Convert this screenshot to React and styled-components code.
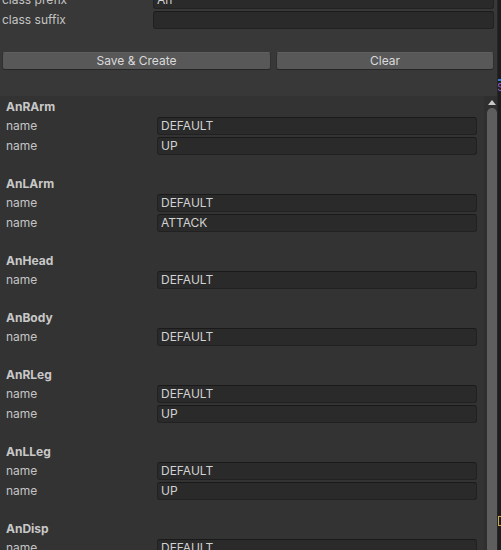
import styled, { createGlobalStyle } from "styled-components";

const GlobalStyle = createGlobalStyle`
    html, body {
        margin: 0;
        padding: 0;
        background: #383838;
        overflow: hidden;
    }
    * {
        box-sizing: border-box;
    }
`;

const Frame = styled.div`
    display: flex;
    width: 501px;
    height: 550px;
    overflow: hidden;
    font-family: Inter, "Noto Sans", sans-serif;
    font-size: 12px;
    color: #c4c4c4;
`;

const Window = styled.div`
    flex: 1;
    display: flex;
    flex-direction: column;
    min-width: 0;
    background: #383838;
`;

const SideStrip = styled.div`
    width: 4px;
    background: #1d1d1d;
    display: flex;
    flex-direction: column;
    overflow: hidden;
    border-left: 1px solid #262626;
`;

const StripSpacer = styled.div`
    height: ${({ $h }) => $h}px;
    flex-shrink: 0;
`;

const StripAccent = styled.div`
    height: 2px;
    background: #2c7fd6;
    flex-shrink: 0;
`;

const StripGlyph = styled.div`
    color: #8a5fc8;
    font-size: 11px;
    line-height: 12px;
    margin-left: -1px;
    flex-shrink: 0;
`;

const StripMark = styled.div`
    width: 3px;
    height: 10px;
    border: 1px solid #c9a94a;
    border-right: none;
    flex-shrink: 0;
`;

const TopPanel = styled.div`
    margin-top: -10px;
    padding: 0 3px 0 2px;
    display: flex;
    flex-direction: column;
`;

const FieldRow = styled.div`
    display: grid;
    grid-template-columns: 151px 1fr;
    align-items: center;
    height: 20px;
`;

const Label = styled.span`
    color: #c4c4c4;
    white-space: nowrap;
    line-height: 18px;
`;

const Field = styled.div`
    height: 18px;
    background: #2a2a2a;
    border: 1px solid #212121;
    border-top-color: #1a1a1a;
    border-radius: 3px;
    padding: 0 3px;
    color: #d2d2d2;
    line-height: 16px;
    white-space: nowrap;
    overflow: hidden;
`;

const ButtonBar = styled.div`
    display: grid;
    grid-template-columns: 269px 1fr;
    gap: 5px;
    margin-top: 22px;
`;

const Button = styled.button`
    height: 18px;
    background: #585858;
    border: 1px solid #303030;
    border-top-color: #5f5f5f;
    border-bottom-color: #252525;
    border-radius: 3px;
    color: #dadada;
    font-family: inherit;
    font-size: 12px;
    line-height: 16px;
    padding: 0;
`;

const ScrollView = styled.div`
    margin-top: 26px;
    flex: 1;
    display: flex;
    min-height: 0;
    background: #333333;
    overflow: hidden;
`;

const ListContent = styled.div`
    flex: 1;
    padding: 1px 7px 0 6px;
    display: flex;
    flex-direction: column;
    min-width: 0;
`;

const Section = styled.div`
    display: flex;
    flex-direction: column;
    padding-bottom: 18px;
    flex-shrink: 0;
`;

const SectionTitle = styled.div`
    height: 19px;
    line-height: 19px;
    font-weight: 700;
    color: #c8c8c8;
`;

const ListRow = styled(FieldRow)`
    grid-template-columns: 151px 1fr;
`;

const ScrollBar = styled.div`
    width: 13px;
    flex-shrink: 0;
    background: #2f2f2f;
    display: flex;
    flex-direction: column;
    align-items: flex-end;
`;

const ArrowUp = styled.div`
    width: 10px;
    height: 12px;
    display: flex;
    align-items: center;
    justify-content: center;
    flex-shrink: 0;
`;

const Thumb = styled.div`
    width: 10px;
    flex: 1;
    background: #5e5e5e;
    border-radius: 5px 5px 0 0;
`;

const SECTIONS = [
    { title: "AnRArm", names: ["DEFAULT", "UP"] },
    { title: "AnLArm", names: ["DEFAULT", "ATTACK"] },
    { title: "AnHead", names: ["DEFAULT"] },
    { title: "AnBody", names: ["DEFAULT"] },
    { title: "AnRLeg", names: ["DEFAULT", "UP"] },
    { title: "AnLLeg", names: ["DEFAULT", "UP"] },
    { title: "AnDisp", names: ["DEFAULT"] },
];

export default function App() {
    return (
        <>
            <GlobalStyle />
            <Frame>
                <Window>
                    <TopPanel>
                        <FieldRow>
                            <Label>class prefix</Label>
                            <Field>An</Field>
                        </FieldRow>
                        <FieldRow>
                            <Label>class suffix</Label>
                            <Field />
                        </FieldRow>
                        <ButtonBar>
                            <Button>Save &amp; Create</Button>
                            <Button>Clear</Button>
                        </ButtonBar>
                    </TopPanel>
                    <ScrollView>
                        <ListContent>
                            {SECTIONS.map((section) => (
                                <Section key={section.title}>
                                    <SectionTitle>{section.title}</SectionTitle>
                                    {section.names.map((name, i) => (
                                        <ListRow key={i}>
                                            <Label>name</Label>
                                            <Field>{name}</Field>
                                        </ListRow>
                                    ))}
                                </Section>
                            ))}
                        </ListContent>
                        <ScrollBar>
                            <ArrowUp>
                                <svg width="8" height="5" viewBox="0 0 8 5">
                                    <path d="M0 5 L4 0 L8 5 Z" fill="#c8c8c8" />
                                </svg>
                            </ArrowUp>
                            <Thumb />
                        </ScrollBar>
                    </ScrollView>
                </Window>
                <SideStrip>
                    <StripSpacer $h={79} />
                    <StripAccent />
                    <StripGlyph>S</StripGlyph>
                    <StripSpacer $h={423} />
                    <StripMark />
                </SideStrip>
            </Frame>
        </>
    );
}
